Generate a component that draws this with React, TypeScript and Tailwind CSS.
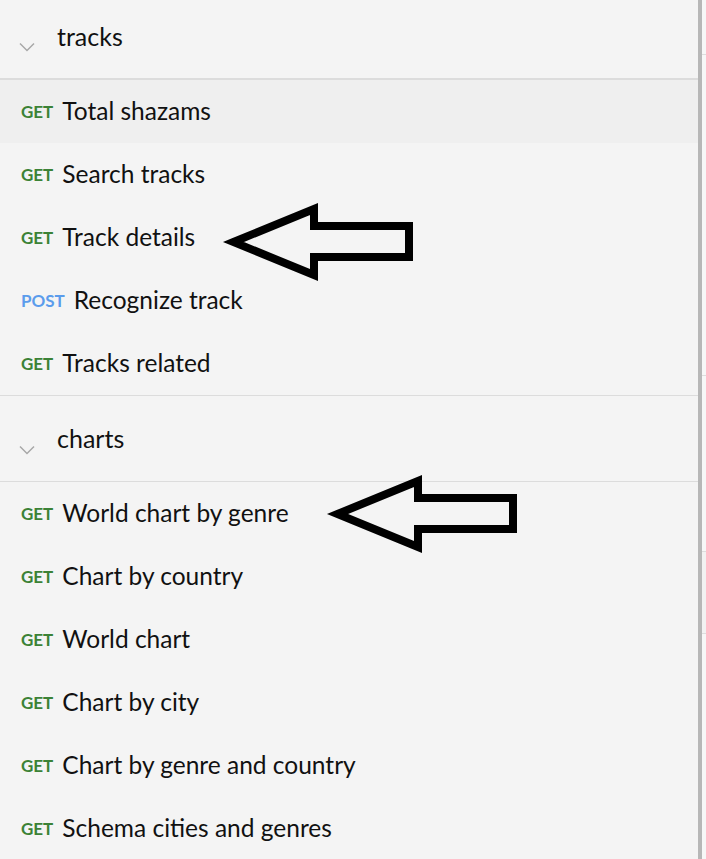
import React from 'react';

type Endpoint = { method: 'GET' | 'POST'; name: string; active?: boolean };

const sections: { title: string; items: Endpoint[] }[] = [
  {
    title: 'tracks',
    items: [
      { method: 'GET', name: 'Total shazams', active: true },
      { method: 'GET', name: 'Search tracks' },
      { method: 'GET', name: 'Track details' },
      { method: 'POST', name: 'Recognize track' },
      { method: 'GET', name: 'Tracks related' },
    ],
  },
  {
    title: 'charts',
    items: [
      { method: 'GET', name: 'World chart by genre' },
      { method: 'GET', name: 'Chart by country' },
      { method: 'GET', name: 'World chart' },
      { method: 'GET', name: 'Chart by city' },
      { method: 'GET', name: 'Chart by genre and country' },
      { method: 'GET', name: 'Schema cities and genres' },
    ],
  },
];

function Chevron() {
  return (
    <svg width="16" height="10" viewBox="0 0 16 10" className="mt-[22px] shrink-0">
      <path d="M1 1.5 L8 8.5 L15 1.5" fill="none" stroke="#a8a8a8" strokeWidth="1.5" />
    </svg>
  );
}

// hand-drawn style outline arrow pointing left
function Arrow({ x, y }: { x: number; y: number }) {
  return (
    <g transform={`translate(${x} ${y})`}>
      <polygon
        points="10.5,39 91,6 91,23 186,23 186,54 91,54 91,72"
        fill="none"
        stroke="#000"
        strokeWidth="8"
        strokeLinejoin="miter"
        strokeMiterlimit="10"
      />
    </g>
  );
}

export default function App() {
  return (
    <div className="relative flex h-[859px] w-[706px] overflow-hidden bg-[#f4f4f4] font-['Lato','Open_Sans',sans-serif] text-[#111]">
      <div className="w-[698px] shrink-0 -mt-[6px]">
        {sections.map((s, i) => (
          <div key={s.title} className={i === 0 ? 'border-b border-[#dcdcdc]' : ''}>
            <div
              className={`flex h-[86px] items-center gap-[22px] px-[19px] border-[#dcdcdc] ${
                i === 0 ? 'border-b-2' : 'border-b'
              }`}
            >
              <Chevron />
              <span className="text-[25px] leading-none">{s.title}</span>
            </div>
            {s.items.map((e) => (
              <div
                key={e.name}
                className={`flex h-[63px] items-center gap-[9px] px-[21px] ${e.active ? 'bg-[#efefef]' : ''}`}
              >
                <span
                  className={`text-[17px] font-bold leading-none ${
                    e.method === 'GET' ? 'text-[#3b8236]' : 'text-[#5b9cec]'
                  }`}
                >
                  {e.method}
                </span>
                <span className="text-[24.5px] leading-none">{e.name}</span>
              </div>
            ))}
          </div>
        ))}
      </div>

      {/* scrollbar edge */}
      <div className="w-[4px] shrink-0 bg-[#b7b7b7]" />

      {/* sliver of the neighbouring panel */}
      <div className="flex flex-1 flex-col bg-[#f7f7f7]">
        <div className="h-[54px]" />
        <div className="h-px bg-[#dddddd]" />
        <div className="h-[320px]" />
        <div className="h-px bg-[#dddddd]" />
        <div className="h-[175px]" />
        <div className="h-[83px] border-y border-[#dddddd] bg-[#f2f2f2]" />
      </div>

      <svg className="pointer-events-none absolute inset-0" width="706" height="859">
        <Arrow x={223} y={203} />
        <Arrow x={327} y={475} />
      </svg>
    </div>
  );
}
